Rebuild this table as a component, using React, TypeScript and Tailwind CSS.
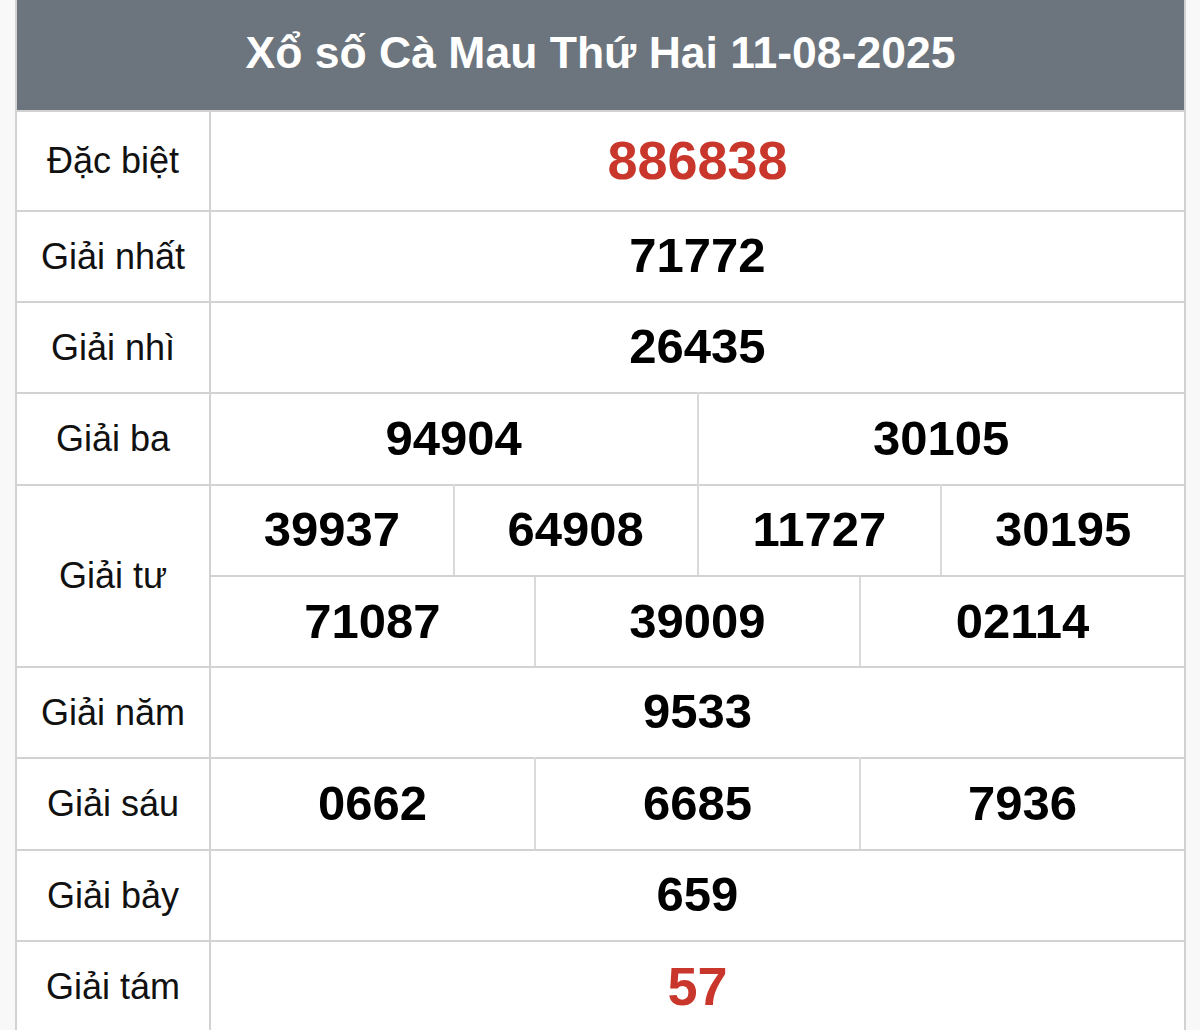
import React from "react";

type Row = { label: string; cells: string[][]; red?: boolean; h: string[] };

const rows: Row[] = [
  { label: "Đặc biệt", cells: [["886838"]], red: true, h: ["h-[100px]"] },
  { label: "Giải nhất", cells: [["71772"]], h: ["h-[91px]"] },
  { label: "Giải nhì", cells: [["26435"]], h: ["h-[91px]"] },
  { label: "Giải ba", cells: [["94904", "30105"]], h: ["h-[92px]"] },
  {
    label: "Giải tư",
    cells: [
      ["39937", "64908", "11727", "30195"],
      ["71087", "39009", "02114"],
    ],
    h: ["h-[91px]", "h-[91px]"],
  },
  { label: "Giải năm", cells: [["9533"]], h: ["h-[91px]"] },
  { label: "Giải sáu", cells: [["0662", "6685", "7936"]], h: ["h-[92px]"] },
  { label: "Giải bảy", cells: [["659"]], h: ["h-[91px]"] },
  { label: "Giải tám", cells: [["57"]], red: true, h: ["h-[91px]"] },
];

export default function App() {
  return (
    <div
      className="w-full h-[1030px] bg-[#f8f8f8] overflow-hidden"
      style={{ fontFamily: '"Liberation Sans", Arial, sans-serif' }}
    >
      <div className="ml-[15px] w-[1171px] border-l-2 border-r-2 border-[#d2d2d2] bg-white">
        <div className="h-[110px] bg-[#6c757d] flex items-center justify-center pb-[4px]">
          <span className="text-white font-bold text-[44.5px] leading-none">
            Xổ số Cà Mau Thứ Hai 11-08-2025
          </span>
        </div>
        {rows.map((r, i) => (
          <div key={i} className="flex border-t-2 border-[#d2d2d2]">
            <div className="w-[194px] shrink-0 border-r-2 border-[#d2d2d2] flex items-center justify-center text-[36px] text-[#111] leading-none">
              {r.label}
            </div>
            <div className="flex-1 flex flex-col">
              {r.cells.map((line, j) => (
                <div
                  key={j}
                  className={`${r.h[j]} flex ${j > 0 ? "border-t-2 border-[#d2d2d2]" : ""} ${j === 0 ? "-mt-[2px]" : ""}`}
                >
                  {line.map((n, k) => (
                    <div
                      key={k}
                      className={`flex-1 basis-0 flex items-center justify-center font-bold leading-none ${
                        k > 0 ? "border-l-2 border-[#dadada]" : ""
                      } ${
                        r.red
                          ? "text-[#c9372c] text-[54px]"
                          : "text-black text-[49px]"
                      }`}
                    >
                      {n}
                    </div>
                  ))}
                </div>
              ))}
            </div>
          </div>
        ))}
      </div>
    </div>
  );
}
